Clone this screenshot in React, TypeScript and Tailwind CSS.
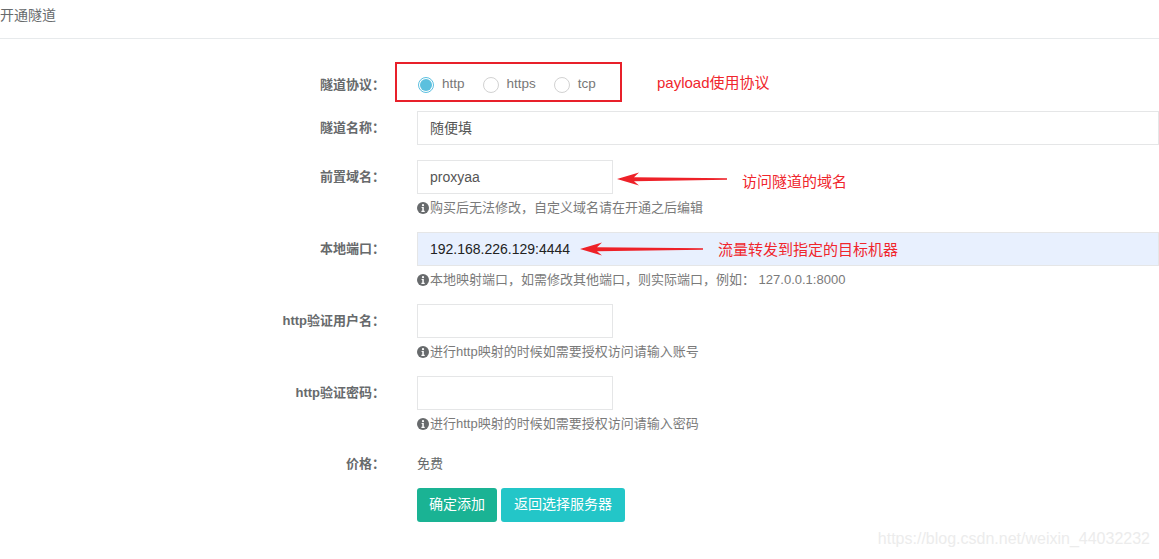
import React from "react";

const InfoIcon = () => (
  <svg width="12" height="12" viewBox="0 0 12 12" className="mr-[1px] shrink-0">
    <circle cx="6" cy="6" r="6" fill="#676a6c" />
    <circle cx="6" cy="3.2" r="1.1" fill="#fff" />
    <path d="M4.6 5h2.2v3.8h0.9v1.1H4.4V8.8h0.9V6.1h-0.7z" fill="#fff" />
  </svg>
);

const Arrow = ({ width }: { width: number }) => (
  <svg width={width} height="14" viewBox={`0 0 ${width} 14`} className="shrink-0">
    <path
      d={`M0 7 L22 0.5 L17 5.2 L${width} 6.3 L${width} 7.7 L17 9.2 L22 13.5 Z`}
      fill="#ee2128"
    />
  </svg>
);

const Radio = ({ checked, label }: { checked?: boolean; label: string }) => (
  <label className="flex items-center gap-[8px]">
    {checked ? (
      <span className="flex h-4 w-4 items-center justify-center rounded-full border border-[#5bbfe0] bg-white">
        <span className="h-[12px] w-[12px] rounded-full bg-[#5bc0de]" />
      </span>
    ) : (
      <span className="h-4 w-4 rounded-full border border-[#d2d2d2] bg-white" />
    )}
    <span className="text-[13.5px] text-[#777]">{label}</span>
  </label>
);

const Label = ({ children }: { children: React.ReactNode }) => (
  <div className="w-[385px] shrink-0 text-right text-[13px] font-bold text-[#676a6c]">
    {children}
  </div>
);

const Help = ({ children }: { children: React.ReactNode }) => (
  <div className="ml-[417px] mt-[5px] flex h-[17px] items-center text-[13px] text-[#7a7a7a]">
    <InfoIcon />
    {children}
  </div>
);

const inputCls =
  "flex h-[34px] items-center border border-[#e5e6e7] bg-white px-3 text-[14px] text-[#555]";

export default function App() {
  return (
    <div className="relative h-[559px] w-[1159px] overflow-hidden bg-white font-['Liberation_Sans','Noto_Sans_CJK_SC',sans-serif]">
      <div className="flex h-[39px] items-center border-b border-[#e7eaec] pb-[8px] text-[14px] text-[#676a6c]">
        开通隧道
      </div>

      {/* 隧道协议 */}
      <div className="mt-[23px] flex items-center">
        <Label>
          <span className="relative top-[3px]">隧道协议：</span>
        </Label>
        <div className="ml-[10px] flex h-[40px] w-[227px] items-center gap-[18px] border-2 border-[#e8202a] pl-[21px] pt-[5px]">
          <Radio checked label="http" />
          <Radio label="https" />
          <Radio label="tcp" />
        </div>
        <span className="relative top-[1px] ml-[35px] text-[15px] text-[#f0262d]">payload使用协议</span>
      </div>

      {/* 隧道名称 */}
      <div className="mt-[9px] flex items-center">
        <Label>隧道名称：</Label>
        <div className={`ml-[32px] w-[800px] ${inputCls}`}>随便填</div>
      </div>

      {/* 前置域名 */}
      <div className="mt-[15px] flex items-center">
        <Label>前置域名：</Label>
        <div className={`ml-[32px] w-[196px] ${inputCls}`}>proxyaa</div>
        <div className="ml-[4px] mt-[4px]">
          <Arrow width={110} />
        </div>
        <span className="ml-[15px] mt-[10px] text-[15px] text-[#f0262d]">访问隧道的域名</span>
      </div>
      <Help>购买后无法修改，自定义域名请在开通之后编辑</Help>

      {/* 本地端口 */}
      <div className="mt-[16px] flex items-center">
        <Label>本地端口：</Label>
        <div className="relative ml-[32px] flex h-[34px] w-[800px] items-center border border-[#e5e6e7] bg-[#e8f0fe] px-3 text-[14px] text-[#222]">
          192.168.226.129:4444
          <div className="absolute left-[162px] top-[9px]">
            <Arrow width={123} />
          </div>
          <span className="absolute left-[300px] top-[6px] text-[15px] text-[#f0262d]">
            流量转发到指定的目标机器
          </span>
        </div>
      </div>
      <Help>本地映射端口，如需修改其他端口，则实际端口，例如： 127.0.0.1:8000</Help>

      {/* http验证用户名 */}
      <div className="mt-[16px] flex items-center">
        <Label>http验证用户名：</Label>
        <div className={`ml-[32px] w-[196px] ${inputCls}`} />
      </div>
      <Help>进行http映射的时候如需要授权访问请输入账号</Help>

      {/* http验证密码 */}
      <div className="mt-[16px] flex items-center">
        <Label>http验证密码：</Label>
        <div className={`ml-[32px] w-[196px] ${inputCls}`} />
      </div>
      <Help>进行http映射的时候如需要授权访问请输入密码</Help>

      {/* 价格 */}
      <div className="mt-[22px] flex items-center">
        <Label>价格：</Label>
        <span className="ml-[32px] text-[13px] text-[#676a6c]">免费</span>
      </div>

      <div className="ml-[417px] mt-[14px] flex gap-[4px]">
        <button className="h-[34px] rounded-[3px] bg-[#1ab394] px-3 text-[14px] text-white">
          确定添加
        </button>
        <button className="h-[34px] rounded-[3px] bg-[#23c6c8] px-[13px] text-[14px] text-white">
          返回选择服务器
        </button>
      </div>

      <div className="absolute bottom-[8px] right-[9px] text-[16px] text-[#ececec]">
        https://blog.csdn.net/weixin_44032232
      </div>
    </div>
  );
}
